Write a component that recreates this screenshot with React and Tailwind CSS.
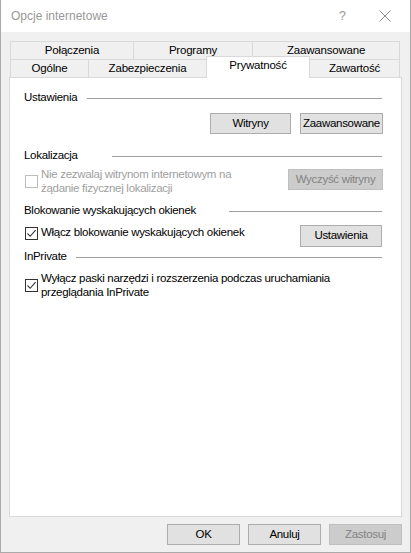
import React from 'react';

const font = { fontFamily: '"Liberation Sans", Arial, sans-serif' };

const Check = ({ checked, disabled }) => (
  <div
    className={`w-[13px] h-[13px] shrink-0 border bg-white flex items-center justify-center ${
      disabled ? 'border-[#bcbcbc]' : 'border-[#333333]'
    }`}
  >
    {checked && (
      <svg width="11" height="11" viewBox="0 0 11 11">
        <path d="M1.5 5.5 L4.2 8.3 L9.6 2.2" fill="none" stroke="#333" strokeWidth="1.1" />
      </svg>
    )}
  </div>
);

const Button = ({ children, disabled, className = '' }) => (
  <div
    className={`h-[21px] flex items-center justify-center border text-[11.5px] tracking-[-0.3px] ${
      disabled
        ? 'bg-[#cccccc] border-[#bfbfbf] text-[#838383]'
        : 'bg-[#e1e1e1] border-[#adadad] text-black'
    } ${className}`}
  >
    {children}
  </div>
);

// group label with its rule; labelClass fixes where the rule starts
const Section = ({ title, labelClass, className = '' }) => (
  <div className={`flex items-center h-[16px] ${className}`}>
    <span className={`text-black whitespace-nowrap shrink-0 ${labelClass}`}>{title}</span>
    <div className="flex-1 h-px bg-[#a0a0a0]"></div>
  </div>
);

const Tab = ({ label, w, selected }) => (
  <div
    className={`flex items-center justify-center text-[11.5px] tracking-[-0.2px] text-black border-l border-t border-r -mr-px ${
      selected
        ? 'bg-white border-[#d9d9d9] h-[22px] relative -mt-[3px] z-10'
        : 'bg-[#f0f0f0] border-[#d9d9d9] h-[18px]'
    }`}
    style={{ width: w }}
  >
    <span className={selected ? 'pb-[3px]' : ''}>{label}</span>
  </div>
);

export default function App() {
  return (
    <div className="w-[411px] h-[553px] bg-white flex flex-col border-l border-r border-b border-[#aaaaaa]" style={font}>
      {/* title bar */}
      <div className="h-[32px] shrink-0 bg-white flex items-center pl-[10px]">
        <span className="text-[12px] text-[#999999]">Opcje internetowe</span>
        <span className="ml-auto text-[13px] text-[#999999] mr-[33px]">?</span>
        <svg width="12" height="12" viewBox="0 0 12 12" className="mr-[19px]">
          <path d="M0.5 0.5 L11.5 11.5 M11.5 0.5 L0.5 11.5" stroke="#8a8a8a" strokeWidth="1" />
        </svg>
      </div>

      {/* body */}
      <div className="flex-1 bg-[#f0f0f0] flex flex-col px-[8px]">
        <div className="mt-[9px] ml-[1px] flex flex-col">
          <div className="flex">
            <Tab label="Połączenia" w={124} />
            <Tab label="Programy" w={120} />
            <Tab label="Zaawansowane" w={148} />
          </div>
          <div className="flex">
            <Tab label="Ogólne" w={79} />
            <Tab label="Zabezpieczenia" w={119} />
            <Tab label="Prywatność" w={104} selected />
            <Tab label="Zawartość" w={91} />
          </div>
        </div>

        {/* panel */}
        <div className="h-[440px] bg-white border border-[#d9d9d9] -mt-px pl-[14px] pr-[19px] pt-[12px] flex flex-col text-[11.5px] tracking-[-0.3px]">
          <Section title="Ustawienia" labelClass="w-[63px]" />
          <div className="flex justify-end gap-[9px] mt-[7px] -mr-[1px]">
            <Button className="w-[81px]">Witryny</Button>
            <Button className="w-[83px]">Zaawansowane</Button>
          </div>

          <Section title="Lokalizacja" labelClass="w-[88px]" className="mt-[14px]" />
          <div className="flex mt-[3px]">
            <div className="flex items-center gap-[3px] ml-[1px]">
              <Check disabled />
              <div className="text-[#a0a0a0] leading-[14px]">
                Nie zezwalaj witrynom internetowym na
                <br />
                żądanie fizycznej lokalizacji
              </div>
            </div>
            <Button disabled className="w-[95px] ml-auto mt-[2px] -mr-[1px]">Wyczyść witryny</Button>
          </div>

          <Section title="Blokowanie wyskakujących okienek" labelClass="w-[205px]" className="mt-[8px]" />
          <div className="flex mt-[6px]">
            <div className="flex items-center gap-[3px] ml-[1px] h-[16px]">
              <Check checked />
              <span className="text-black">Włącz blokowanie wyskakujących okienek</span>
            </div>
            <Button className="w-[82px] ml-auto h-[22px]">Ustawienia</Button>
          </div>

          <Section title="InPrivate" labelClass="w-[52px]" className="mt-[2px]" />
          <div className="flex items-center gap-[3px] ml-[1px] mt-[6px]">
            <Check checked />
            <div className="text-black leading-[14px]">
              Wyłącz paski narzędzi i rozszerzenia podczas uruchamiania
              <br />
              przeglądania InPrivate
            </div>
          </div>
        </div>

        {/* footer */}
        <div className="flex justify-end gap-[8px] mt-[7px]">
          <Button className="w-[73px]">OK</Button>
          <Button className="w-[73px]">Anuluj</Button>
          <Button disabled className="w-[73px]">Zastosuj</Button>
        </div>
      </div>
    </div>
  );
}
